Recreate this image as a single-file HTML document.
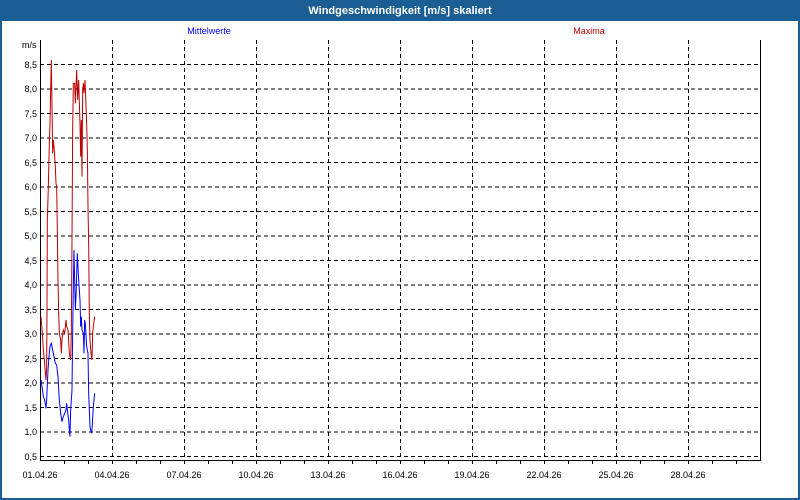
<!DOCTYPE html>
<html><head><meta charset="utf-8"><style>
html,body{margin:0;padding:0;width:800px;height:500px;overflow:hidden;background:#fff;font-family:"Liberation Sans",sans-serif}
</style></head><body>
<svg width="800" height="500" xmlns="http://www.w3.org/2000/svg" font-family="Liberation Sans, sans-serif">
<rect x="0" y="0" width="800" height="500" fill="#fff"/>
<rect x="0" y="0" width="800" height="21" fill="#1b5e94"/>
<rect x="0" y="0" width="2" height="500" fill="#1b5e94"/>
<rect x="798" y="0" width="2" height="500" fill="#1b5e94"/>
<rect x="0" y="498" width="800" height="2" fill="#1b5e94"/>
<text x="400" y="14" fill="#fff" font-size="11" font-weight="bold" text-anchor="middle">Windgeschwindigkeit [m/s] skaliert</text>
<text x="209" y="34" fill="#0000ff" font-size="9" text-anchor="middle">Mittelwerte</text>
<text x="589" y="34" fill="#c00000" font-size="9" text-anchor="middle">Maxima</text>
<text x="22" y="48" font-size="9" fill="#000">m/s</text>
<g stroke="#000" stroke-width="1" stroke-dasharray="4,3" fill="none">
<path d="M40 64.5H760M40 89H760M40 113.5H760M40 138H760M40 162.5H760M40 187H760M40 211.5H760M40 236H760M40 260.5H760M40 285H760M40 309.5H760M40 334H760M40 358.5H760M40 383H760M40 407.5H760M40 432H760M40 456.5H760"/>
<path d="M112.5 40V460M184.5 40V460M256.5 40V460M328.5 40V460M400.5 40V460M472.5 40V460M544.5 40V460M616.5 40V460M688.5 40V460"/>
</g>
<path d="M40.5 40V460.5H760.5V40" stroke="#000" fill="none"/>
<g stroke="#000">
<path id="t" d="M64.5 460v4M88.5 460v4M112.5 460v4M136.5 460v4M160.5 460v4M184.5 460v4M208.5 460v4M232.5 460v4M256.5 460v4M280.5 460v4M304.5 460v4M328.5 460v4M352.5 460v4M376.5 460v4M400.5 460v4M424.5 460v4M448.5 460v4M472.5 460v4M496.5 460v4M520.5 460v4M544.5 460v4M568.5 460v4M592.5 460v4M616.5 460v4M640.5 460v4M664.5 460v4M688.5 460v4M712.5 460v4M736.5 460v4"/>
</g>
<g font-size="9" fill="#000" text-anchor="end">
<text x="37" y="68">8,5</text><text x="37" y="92">8,0</text><text x="37" y="117">7,5</text><text x="37" y="141">7,0</text><text x="37" y="166">6,5</text><text x="37" y="190">6,0</text><text x="37" y="215">5,5</text><text x="37" y="239">5,0</text><text x="37" y="264">4,5</text><text x="37" y="288">4,0</text><text x="37" y="313">3,5</text><text x="37" y="337">3,0</text><text x="37" y="362">2,5</text><text x="37" y="386">2,0</text><text x="37" y="411">1,5</text><text x="37" y="435">1,0</text><text x="37" y="460">0,5</text>
</g>
<g font-size="9" fill="#000" text-anchor="middle">
<text x="40" y="478">01.04.26</text><text x="112" y="478">04.04.26</text><text x="184" y="478">07.04.26</text><text x="256" y="478">10.04.26</text><text x="328" y="478">13.04.26</text><text x="400" y="478">16.04.26</text><text x="472" y="478">19.04.26</text><text x="544" y="478">22.04.26</text><text x="616" y="478">25.04.26</text><text x="688" y="478">28.04.26</text>
</g>
<g transform="translate(30,40) scale(0.3333)" fill="none">
<polyline vector-effect="non-scaling-stroke" stroke="#c00000" stroke-width="1" points="33,830 37,880 40,930 44,970 46,1000 48,1020 50,980 51,800 52,540 55,440 58,310 60,250 62,150 64,60 66,200 68,340 70,300 72,320 74,350 76,380 78,430 80,440 82,570 84,720 86,820 88,880 92,900 94,940 96,900 98,880 100,870 104,880 106,860 108,840 110,860 114,870 118,940 122,960 124,880 126,600 128,270 130,130 134,130 136,190 140,90 143,180 146,120 150,250 152,350 154,240 156,410 158,150 160,130 162,160 165,120 170,250 172,330 174,500 176,610 178,830 180,900 183,940 186,960 188,880 190,860 194,830"/>
<polyline vector-effect="non-scaling-stroke" stroke="#0000ff" stroke-width="1" points="33,1020 36,1040 40,1070 44,1080 48,1105 50,1080 54,990 57,950 60,920 64,910 68,930 72,950 76,970 80,975 84,1010 88,1080 92,1120 96,1145 100,1130 104,1120 108,1110 110,1090 112,1110 116,1140 118,1170 120,1190 122,1110 126,1050 128,880 130,740 132,630 136,810 138,770 142,640 144,680 146,720 150,780 152,860 154,830 156,870 160,880 162,940 164,840 166,850 170,920 174,940 176,1060 180,1160 184,1180 186,1170 190,1100 194,1060"/>
</g>
</svg>
</body></html>
